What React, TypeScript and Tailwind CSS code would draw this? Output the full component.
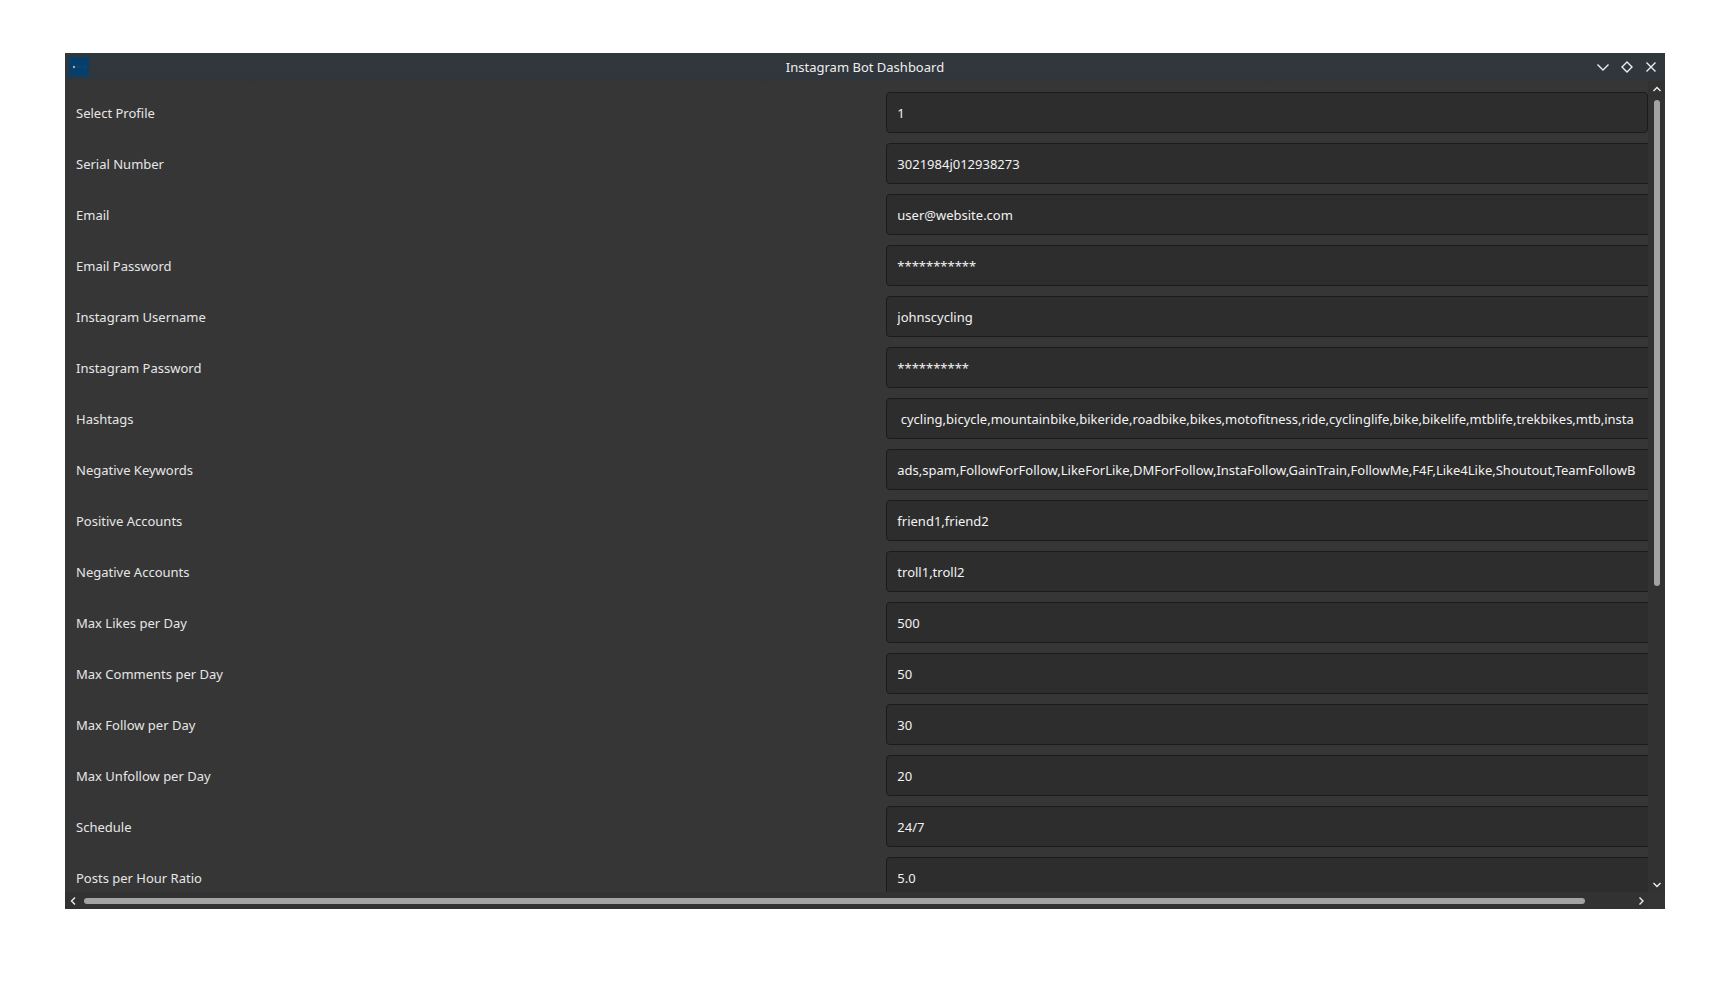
import React from 'react';

type Field = { id: string; label: string; value: string };

const fields: Field[] = [
  { id: 'serial-number', label: 'Serial Number', value: '3021984j012938273' },
  { id: 'email', label: 'Email', value: 'user@website.com' },
  { id: 'email-password', label: 'Email Password', value: '***********' },
  { id: 'instagram-username', label: 'Instagram Username', value: 'johnscycling' },
  { id: 'instagram-password', label: 'Instagram Password', value: '**********' },
  {
    id: 'hashtags',
    label: 'Hashtags',
    value:
      ' cycling,bicycle,mountainbike,bikeride,roadbike,bikes,motofitness,ride,cyclinglife,bike,bikelife,mtblife,trekbikes,mtb,insta',
  },
  {
    id: 'negative-keywords',
    label: 'Negative Keywords',
    value:
      'ads,spam,FollowForFollow,LikeForLike,DMForFollow,InstaFollow,GainTrain,FollowMe,F4F,Like4Like,Shoutout,TeamFollowB',
  },
  { id: 'positive-accounts', label: 'Positive Accounts', value: 'friend1,friend2' },
  { id: 'negative-accounts', label: 'Negative Accounts', value: 'troll1,troll2' },
  { id: 'max-likes', label: 'Max Likes per Day', value: '500' },
  { id: 'max-comments', label: 'Max Comments per Day', value: '50' },
  { id: 'max-follow', label: 'Max Follow per Day', value: '30' },
  { id: 'max-unfollow', label: 'Max Unfollow per Day', value: '20' },
  { id: 'schedule', label: 'Schedule', value: '24/7' },
  { id: 'posts-per-hour', label: 'Posts per Hour Ratio', value: '5.0' },
];

const control =
  'h-[41px] rounded border border-[#1b1b1b] bg-[#2d2d2d] px-2.5 text-[13px] text-[#f2f2f2] outline-none';

function Glyph({ d, size }: { d: string; size: number }) {
  return (
    <svg width={size} height={size} viewBox={`0 0 ${size} ${size}`} fill="none" stroke="currentColor" aria-hidden="true">
      <path d={d} strokeWidth={1.4} />
    </svg>
  );
}

function TitleBar() {
  return (
    <header className="grid h-7 shrink-0 grid-cols-[1fr_auto_1fr] items-center bg-linear-to-b from-[#31383c] to-[#30353b] px-1 text-[#eeeeee]">
      <svg width="20" height="20" viewBox="0 0 20 20" aria-hidden="true">
        <rect width="20" height="20" fill="#063f6b" />
        <circle cx="5" cy="10" r="1.2" fill="#a9a9a3" />
        <path d="M8 10h4M14.500 9.500h2" stroke="#2b4d69" strokeWidth="0.8" />
      </svg>
      <h1 className="text-[13px] leading-5">Instagram Bot Dashboard</h1>
      <div className="flex justify-end gap-3 pr-1">
        <button aria-label="Minimize">
          <Glyph size={12} d="M0.500 3.500l5.500 5.500 5.500-5.500" />
        </button>
        <button aria-label="Maximize">
          <Glyph size={12} d="M6 1l5 5-5 5-5-5z" />
        </button>
        <button aria-label="Close">
          <Glyph size={12} d="M1.500 1.500l9 9M10.500 1.500l-9 9" />
        </button>
      </div>
    </header>
  );
}

export default function App() {
  return (
    <div className="h-screen bg-white px-[65px] pt-[53px] pb-[77px] font-['Noto_Sans',sans-serif]">
      <main className="flex h-full flex-col overflow-hidden bg-[#363636]">
        <TitleBar />
        <div className="grid min-h-0 flex-1 grid-cols-[minmax(0,1fr)_17px] grid-rows-[minmax(0,1fr)_17px]">
          <form className="overflow-hidden pt-[11px]">
            <div className="grid w-full grid-cols-[51%_49%] items-center">
              <label htmlFor="profile" className="pl-[11px] text-[13px] leading-5 text-[#e6e6e6]">
                Select Profile
              </label>
              <div className="flex pl-3.5">
                <select id="profile" className={`${control} w-full appearance-none pt-0.5`} defaultValue="1">
                  <option>1</option>
                </select>
              </div>
            </div>
            {fields.map((f) => (
              <div key={f.id} className="mt-2.5 grid w-full grid-cols-[51%_52%] items-center">
                <label htmlFor={f.id} className="pl-[11px] text-[13px] leading-5 text-[#e6e6e6]">
                  {f.label}
                </label>
                <div className="flex pl-3.5">
                  <input id={f.id} type="text" className={`${control} w-full`} defaultValue={f.value} />
                </div>
              </div>
            ))}
          </form>
          <div className="flex flex-col items-center bg-[#323232] text-[#eeeeee]">
            <button aria-label="Scroll up" className="flex h-[19px] items-start pt-1">
              <Glyph size={8} d="M0.500 6l3.500-3.500 3.500 3.500" />
            </button>
            <div className="flex w-1.5 flex-1 flex-col">
              <div className="h-5/8 rounded-full bg-[#a3a3a3]" />
            </div>
            <button aria-label="Scroll down" className="flex h-[15px] items-center">
              <Glyph size={8} d="M0.500 2l3.500 3.500 3.500-3.500" />
            </button>
          </div>
          <div className="flex items-center bg-[#323232] text-[#eeeeee]">
            <button aria-label="Scroll left" className="flex w-[19px] pl-1">
              <Glyph size={8} d="M6 0.500l-3.500 3.500 3.500 3.500" />
            </button>
            <div className="flex h-1.5 flex-1">
              <div className="w-31/32 rounded-full bg-[#a3a3a3]" />
            </div>
            <button aria-label="Scroll right" className="flex w-[15px] justify-center">
              <Glyph size={8} d="M2.500 0.500l3.500 3.500-3.500 3.500" />
            </button>
          </div>
          <div className="bg-[#343434]" />
        </div>
      </main>
    </div>
  );
}
